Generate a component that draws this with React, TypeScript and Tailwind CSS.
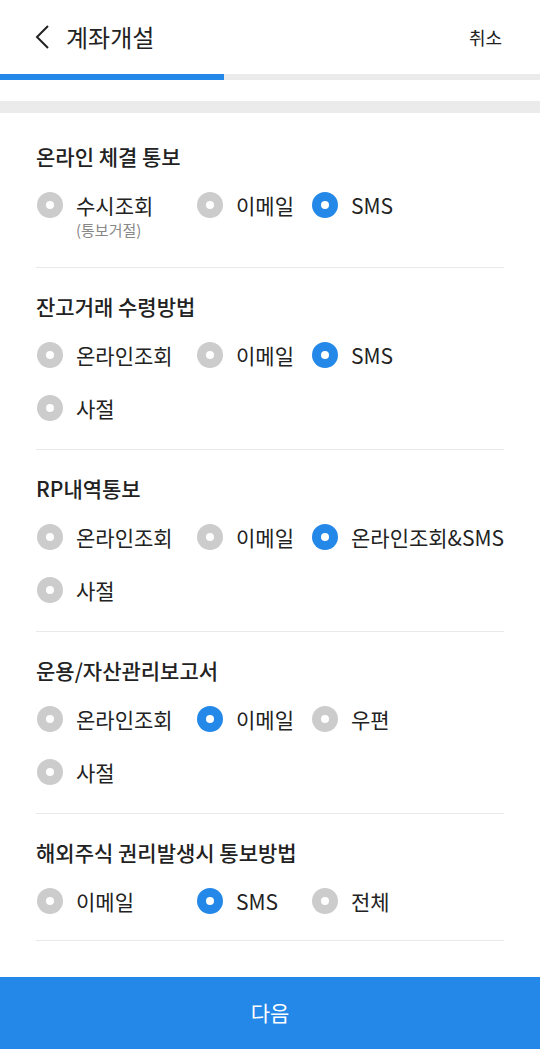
type Option = { label: string; sub?: string };

type Section = { title: string; options: Option[]; selected: number };

const sections: Section[] = [
  {
    title: "온라인 체결 통보",
    options: [{ label: "수시조회", sub: "(통보거절)" }, { label: "이메일" }, { label: "SMS" }],
    selected: 2,
  },
  {
    title: "잔고거래 수령방법",
    options: [{ label: "온라인조회" }, { label: "이메일" }, { label: "SMS" }, { label: "사절" }],
    selected: 2,
  },
  {
    title: "RP내역통보",
    options: [{ label: "온라인조회" }, { label: "이메일" }, { label: "온라인조회&SMS" }, { label: "사절" }],
    selected: 2,
  },
  {
    title: "운용/자산관리보고서",
    options: [{ label: "온라인조회" }, { label: "이메일" }, { label: "우편" }, { label: "사절" }],
    selected: 1,
  },
  {
    title: "해외주식 권리발생시 통보방법",
    options: [{ label: "이메일" }, { label: "SMS" }, { label: "전체" }],
    selected: 1,
  },
];

function Radio({ checked }: { checked: boolean }) {
  return (
    <span
      className={`mt-px flex h-[26px] w-[26px] shrink-0 items-center justify-center rounded-full ${
        checked ? "bg-[#2488e8]" : "bg-[#cccccc]"
      }`}
    >
      <span className="h-[8px] w-[8px] rounded-full bg-white" />
    </span>
  );
}

function OptionGroup({ section, first, last }: { section: Section; first: boolean; last: boolean }) {
  return (
    <section
      className={`mx-9 border-b border-[#e9e9e9] ${first ? "pt-[29px] pb-[28px]" : "pt-[24px]"} ${
        last ? "pb-[25px]" : first ? "" : "pb-[27px]"
      }`}
    >
      <h2 className="text-[21px] leading-[28px] font-medium text-[#222]">{section.title}</h2>
      <div className="mt-[21px] grid grid-cols-[160px_115px_1fr] gap-y-[25px]">
        {section.options.map((o, i) => (
          <div key={i} className="flex items-start gap-[13px] pl-px">
            <Radio checked={i === section.selected} />
            <div className="flex flex-col">
              <span className="text-[21px] leading-[28px] whitespace-nowrap text-[#222]">{o.label}</span>
              {o.sub && <span className="mt-[2px] text-[15px] leading-[18px] text-[#888]">{o.sub}</span>}
            </div>
          </div>
        ))}
      </div>
    </section>
  );
}

export default function App() {
  return (
    <div
      className="flex min-h-screen flex-col bg-white"
      style={{ fontFamily: '"Noto Sans CJK KR", "Noto Sans", sans-serif' }}
    >
      <header className="flex h-[74px] items-center justify-between pr-[38px] pl-[34px]">
        <div className="flex items-center gap-[16px]">
          <svg width="16" height="24" viewBox="0 0 16 24" fill="none">
            <path d="M14 1 L3 12 L14 23" stroke="#222" strokeWidth="2" strokeLinejoin="miter" />
          </svg>
          <h1 className="text-[24px] leading-none text-[#222]">계좌개설</h1>
        </div>
        <button className="text-[18px] text-[#222]">취소</button>
      </header>

      <div className="flex h-[6px] bg-[#ebebeb]">
        <div className="w-[224px] bg-[#2488e8]" />
      </div>

      <div className="mt-[21px] h-[12px] bg-[#ebebeb]" />

      <main className="flex flex-col">
        {sections.map((s, i) => (
          <OptionGroup key={s.title} section={s} first={i === 0} last={i === sections.length - 1} />
        ))}
      </main>

      <button className="mt-auto h-[72px] w-full bg-[#2488e8] text-[21px] text-white">다음</button>
    </div>
  );
}
